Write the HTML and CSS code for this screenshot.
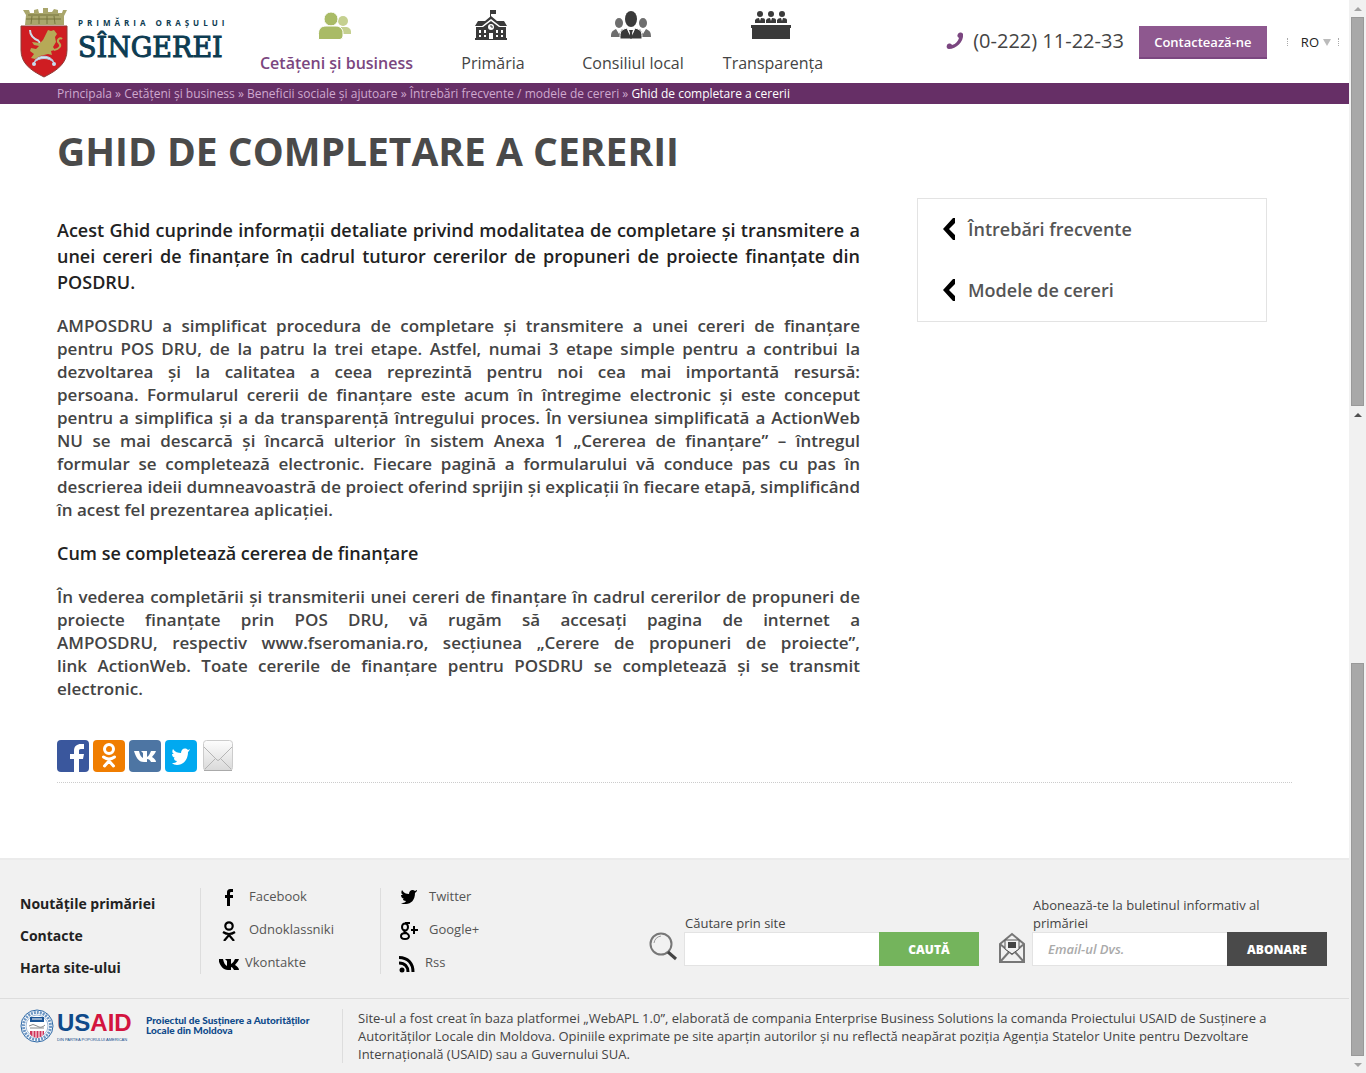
FILE: index.html
```html
<!DOCTYPE html>
<html lang="ro">
<head>
<meta charset="utf-8">
<title>Ghid de completare a cererii</title>
<link rel="stylesheet" href="styles.css">
</head>
<body>
<div class="page">
  <header class="header">
    <a class="logo" href="#">
      <svg class="crest" viewBox="0 0 48 70" width="48" height="70" aria-hidden="true">
        <path d="M5 17 6 7 3 2h6l1 3h4V2l4-1 1 4h4V0h5v4h4l2-3 4 1v3h4l1-3h4l-3 6v9z" fill="#a9a66c"/>
        <path d="M6 11h35M8 7h31M11 16l1-8M19 16V8M27 16V8M35 16l-1-8" stroke="#77753f" fill="none"/>
        <path d="M1 18h46v24C47 55 38 62 24 69 10 62 1 55 1 42z" fill="#cf1d22" stroke="#8f3b37"/>
        <path d="M10 22c0 6 4 9 9 11M19 33l1 4" stroke="#cdddeb" stroke-width="2" fill="none"/>
        <path d="M26 26l2-4 3 1 3-1 3 4-2 3 1 5-3 5 2 3-4 1 1 4-4-1-8 2-5 3-4-1 3-4-4-3 1-3 5 1 3-3-5-1-2-3 8 1 3-3z" fill="#b6a957"/>
        <path d="M34 42c5-1 8-4 5-7s1-6 3-4" stroke="#b6a957" stroke-width="2" fill="none"/>
        <path d="M14 55c2-9 18-9 20 0-4-6-16-6-20 0z" fill="#d9e6f0" stroke="#b9cbe0"/>
        <circle cx="14" cy="56" r="2" fill="#c9dcef"/><circle cx="34" cy="56" r="2" fill="#c9dcef"/>
      </svg>
      <span class="logo-text"><span class="logo-small">PRIMĂRIA ORAȘULUI</span><span class="logo-big">SÎNGEREI</span></span>
    </a>
    <nav class="nav">
      <a class="nav-item active" href="#">
        <svg width="34" height="30" viewBox="0 0 34 30" aria-hidden="true"><g fill="#c5d090"><circle cx="25" cy="11" r="5"/><path d="M20 24v-7h7c4 0 6 2 6 5v2z"/></g><g fill="#a9bb66" stroke="#fff"><circle cx="13" cy="9" r="7"/><path d="M.5 29.500v-6C.5 19 3 16 8 16h10c4 0 7 3 7 7v3q0 3-3 3.500z"/></g></svg>
        <span>Cetățeni și business</span></a>
      <a class="nav-item" href="#">
        <svg width="34" height="30" viewBox="0 0 34 30" aria-hidden="true"><g fill="#3a3a3a"><path d="M16 0h6v4h-5v5h-1z"/><path d="M1 16 4 11h7l6-5 6 5h7l3 5h-7l-9-7-9 7z"/><path d="M2 17h7l8-6 8 6h7v11h1v2H1v-2h1z"/></g><circle cx="17" cy="17" r="3" fill="#fff"/><path d="M17 15v2h2" stroke="#3a3a3a" fill="none"/><path d="M5 20h2v3H5zm5 0h2v3h-2zm-5 5h2v2H5zm5 0h2v2h-2zm12-5h2v3h-2zm5 0h2v3h-2zm-5 5h2v2h-2zm5 0h2v2h-2zM15 23h4v6h-4z" fill="#fff"/></svg>
        <span>Primăria</span></a>
      <a class="nav-item" href="#">
        <svg width="42" height="30" viewBox="0 0 42 30" aria-hidden="true"><g fill="#6e6e6e"><ellipse cx="9" cy="13" rx="4" ry="5"/><ellipse cx="33" cy="13" rx="4" ry="5"/><path d="M1 27c0-5 1-6 5-8l3 5 3-5 3 2v6zM41 27c0-5-1-6-5-8l-3 5-3-5-3 2v6z"/></g><path d="M10 29c0-7 0-9 7-11l4 9 4-9c7 2 7 4 7 11z" fill="#3a3a3a" stroke="#fff"/><path d="M19 20h4l-1 3 1 4-2 2-2-2 1-4z" fill="#3a3a3a"/><ellipse cx="21" cy="9" rx="6" ry="8" fill="#3a3a3a"/></svg>
        <span>Consiliul local</span></a>
      <a class="nav-item" href="#">
        <svg width="40" height="30" viewBox="0 0 40 30" aria-hidden="true"><g fill="#3a3a3a"><circle cx="9" cy="4" r="3"/><circle cx="20" cy="4" r="3"/><circle cx="31" cy="4" r="3"/><path d="M4 13v-3q1-2 4-2l1 3 1-3q4 0 4 2v3zm11 0v-3q1-2 4-2l1 3 1-3q4 0 4 2v3zm11 0v-3q1-2 4-2l1 3 1-3q4 0 4 2v3zM0 15h40v3h-1v11H1V18H0z"/></g></svg>
        <span>Transparența</span></a>
    </nav>
    <div class="header-tools">
      <a class="phone" href="tel:022211223"><svg width="18" height="18" viewBox="0 0 18 18" aria-hidden="true"><path d="M1 13c1-2 4-2 5 0 4-1 6-4 7-7-2-1-2-3-1-4 1-2 4-2 5 0C18 10 10 17 3 17c-2 0-3-2-2-4z" fill="#7b4680"/></svg>(0-222) 11-22-33</a>
      <button class="contact" type="button">Contactează-ne</button>
      <button class="lang" type="button">RO<svg width="8" height="7" viewBox="0 0 8 7" aria-hidden="true"><path d="M0 0h8L4 7z" fill="#bbb"/></svg></button>
    </div>
  </header>
  <nav class="crumbs" aria-label="Navigare"><a href="#">Principala</a> » <a href="#">Cetățeni și business</a> » <a href="#">Beneficii sociale și ajutoare</a> » <a href="#">Întrebări frecvente / modele de cereri</a> » <span class="current">Ghid de completare a cererii</span></nav>
  <main class="content">
    <h1>GHID DE COMPLETARE A CERERII</h1>
    <div class="columns">
      <article class="article">
        <p class="lead">Acest Ghid cuprinde informații detaliate privind modalitatea de completare şi transmitere a unei cereri de finanțare în cadrul tuturor cererilor de propuneri de proiecte finanțate din POSDRU.</p>
        <p>AMPOSDRU a simplificat procedura de completare şi transmitere a unei cereri de finanțare pentru POS DRU, de la patru la trei etape. Astfel, numai 3 etape simple pentru a contribui la dezvoltarea şi la calitatea a ceea reprezintă pentru noi cea mai importantă resursă: persoana.&nbsp;Formularul cererii de finanțare este acum în întregime electronic şi este conceput pentru a simplifica şi a da transparență întregului proces. În versiunea simplificată a ActionWeb NU se mai descarcă şi încarcă ulterior în sistem Anexa 1 „Cererea de finanțare” – întregul formular se completează electronic. Fiecare pagină a formularului vă conduce pas cu pas în descrierea ideii dumneavoastră de proiect oferind sprijin şi explicații în fiecare etapă, simplificând în acest fel prezentarea aplicației.</p>
        <p class="lead">Cum se completează cererea de finanțare</p>
        <p>În vederea completării şi transmiterii unei cereri de finanțare în cadrul cererilor de propuneri de proiecte finanțate prin POS DRU, vă rugăm să accesați pagina de internet a AMPOSDRU,&nbsp;respectiv&nbsp;www.fseromania.ro, secțiunea „Cerere de propuneri de proiecte”, link&nbsp;ActionWeb.&nbsp;Toate cererile de finanțare pentru POSDRU se completează şi se transmit electronic.</p>
      </article>
      <aside class="side">
        <a href="#"><svg width="12" height="22" viewBox="0 0 12 22" aria-hidden="true"><path d="M0 11 10 0h2v5l-6 6 6 6v5h-2z"/></svg>Întrebări frecvente</a>
        <a href="#"><svg width="12" height="22" viewBox="0 0 12 22" aria-hidden="true"><path d="M0 11 10 0h2v5l-6 6 6 6v5h-2z"/></svg>Modele de cereri</a>
      </aside>
    </div>
    <div class="share">
      <a href="#" aria-label="Facebook"><svg width="32" height="32" viewBox="0 0 32 32"><rect width="32" height="32" rx="4" fill="#3a579d"/><path d="M17 32V19h-4v-5h4v-3c0-5 3-7 7-7h3v5h-3c-2 0-2 1-2 2v3h5l-1 5h-4v13z" fill="#fff"/></svg></a>
      <a href="#" aria-label="Odnoklassniki"><svg width="32" height="32" viewBox="0 0 32 32"><rect width="32" height="32" rx="4" fill="#f07d00"/><g fill="none" stroke="#fff" stroke-width="3" stroke-linecap="round"><circle cx="16" cy="9" r="4.500"/><path d="M10.500 17q5.500 4 11 0M11.500 26l4.500-5 4.500 5"/></g></svg></a>
      <a href="#" aria-label="Vkontakte"><svg width="32" height="32" viewBox="0 0 32 32"><rect width="32" height="32" rx="4" fill="#4d75a3"/><path d="M15 22C9 22 7 17 5 11h5c1 4 2 6 4 7v-5l-2-2h6v6c2-1 3-4 4-6h5c-1 3-3 4-4 6 2 1 4 3 4 5h-5c-1-2-2-3-4-3v3z" fill="#fff"/></svg></a>
      <a href="#" aria-label="Twitter"><svg width="32" height="32" viewBox="0 0 32 32"><rect width="32" height="32" rx="4" fill="#00a9f0"/><path transform="translate(7 7)" d="M18 3l-2 2c0 8-5 13-11 13-2 0-4-1-5-2 2 0 4 0 5-2-2 0-3-1-3-3h1c-2-1-3-2-3-4h2C0 6 0 4 1 2c2 3 5 4 8 4 0-4 4-6 7-3l2-1-1 2z" fill="#fff"/></svg></a>
      <a href="#" aria-label="Email"><svg width="34" height="32" viewBox="0 0 34 32"><defs><linearGradient id="m" x2="0" y2="1"><stop stop-color="#fdfdfd"/><stop offset="1" stop-color="#d9d9d9"/></linearGradient></defs><rect x="2.500" y=".5" width="29" height="30" rx="3" fill="url(#m)" stroke="#ccc"/><path d="M3 30.500h28" stroke="#aaa"/><path d="M3 7l13 13q1 1 2 0L31 7M4 29l10-10M30 29 20 19" stroke="#b5b5b5" fill="none"/></svg></a>
    </div>
  </main>
  <footer class="footer">
    <div class="footer-top">
      <nav class="footer-links"><a href="#">Noutățile primăriei</a><a href="#">Contacte</a><a href="#">Harta site-ului</a></nav>
      <nav class="social">
        <a href="#"><svg width="20" height="20" viewBox="0 0 20 20"><path d="M8 18v-8H6V7h2V5c0-3 1-4 4-4h2v3h-2c-1 0-1 1-1 1v2h3v3h-3v8z"/></svg>Facebook</a>
        <a href="#"><svg width="20" height="20" viewBox="0 0 20 20"><g fill="none" stroke="#000" stroke-width="2.200"><circle cx="10" cy="5" r="3.700"/><path d="M4 11q6 4 12 0M5 20l5-6 5 6"/></g></svg>Odnoklassniki</a>
        <a class="near" href="#"><svg width="20" height="20" viewBox="0 0 20 20"><path transform="translate(-6 -6)" d="M15 22C9 22 7 17 5 11h5c1 4 2 6 4 7v-5l-2-2h6v5c2-1 3-3 4-5h4c-1 3-3 4-4 6 2 1 4 3 4 5h-5c-1-2-2-3-3-3v3z"/></svg>Vkontakte</a>
      </nav>
      <nav class="social">
        <a href="#"><svg width="20" height="20" viewBox="0 0 20 20"><path transform="translate(1 0)" d="M17 3l-2 2c0 7-4 11-9 11-2 0-4 0-5-1 2 0 4 0 5-2-2 0-3-1-3-2h1C2 10 1 9 1 7h2C1 6 1 4 2 2c2 3 4 4 7 4 0-4 4-5 6-3l2-1z"/></svg>Twitter</a>
        <a href="#"><svg width="20" height="20" viewBox="0 0 20 20"><g fill="none" stroke="#000" stroke-width="2"><ellipse cx="6" cy="6" rx="3" ry="3.500"/><path d="M6 2h5M6 9c-3 2 4 3 4 6 0 4-8 4-8 0 0-2 2-3 5-3M12 9h7M15 5v8"/></g></svg>Google+</a>
        <a class="near" href="#"><svg width="20" height="20" viewBox="0 0 20 20"><circle cx="3" cy="16" r="2.500"/><path d="M0 9c6 0 9 4 9 9M0 3.500c9 0 14 6 14 14.500" fill="none" stroke="#000" stroke-width="3"/></svg>Rss</a>
      </nav>
      <form class="form search">
        <svg width="30" height="34" viewBox="0 0 30 34" aria-hidden="true"><circle cx="13" cy="12" r="10.500" fill="none" stroke="#777" stroke-width="2"/><path d="M6 11q1-6 7-7" fill="none" stroke="#999"/><path d="M20 20l8 7" stroke="#444" stroke-width="3"/></svg>
        <div class="field"><label for="q">Căutare prin site</label><div class="row"><input id="q" type="text"><button class="go" type="button">CAUTĂ</button></div></div>
      </form>
      <form class="form">
        <svg width="28" height="34" viewBox="0 0 28 34" aria-hidden="true"><path d="M2 12 14 2l12 10v18H2zM2 12l12 10 12-10M2 30l9-10M26 30l-9-10" fill="#f1f1f1" stroke="#777" stroke-width="2"/><path d="M7 17V8h14v9l-7 5z" fill="#f1f1f1" stroke="#555"/><path d="M10 10h8v6h-8z" fill="#444"/></svg>
        <div class="field"><label for="e">Abonează-te la buletinul informativ al primăriei</label><div class="row"><input id="e" type="email" placeholder="Email-ul Dvs."><button class="subscribe" type="button">ABONARE</button></div></div>
      </form>
    </div>
    <div class="footer-bottom">
      <a class="usaid" href="#">
        <svg width="34" height="34" viewBox="0 0 34 34" aria-hidden="true"><circle cx="17" cy="17" r="16" fill="#fff" stroke="#2c67a5"/><circle cx="17" cy="17" r="13.500" fill="none" stroke="#6e97c4" stroke-width="3" stroke-dasharray="2 1"/><circle cx="17" cy="17" r="11" fill="#fff" stroke="#9db8d6"/><path d="M10 8h14v5H10z" fill="#1c5596"/><path d="M12 10h10" stroke="#fff"/><path d="M9 17q4-3 8 0t8-1M10 19h14" stroke="#888" fill="none"/><path d="M10 22h14v3q-2 3-7 4-5-1-7-4z" fill="#d0345a"/><path d="M13 22v6M16 22v7M19 22v7M22 22v5" stroke="#fff"/></svg>
        <span class="usaid-name"><span class="usaid-mark">US<b>AID</b></span><span class="usaid-tag">DIN PARTEA POPORULUI AMERICAN</span></span>
        <span class="project">Proiectul de Susținere a Autorităților<br>Locale din Moldova</span>
      </a>
      <p class="note">Site-ul a fost creat în baza platformei „WebAPL 1.0”, elaborată de compania Enterprise Business Solutions la comanda Proiectului USAID de Susținere a Autorităților Locale din Moldova. Opiniile exprimate pe site aparțin autorilor și nu reflectă neapărat poziția Agenţia Statelor Unite pentru Dezvoltare Internaţională (USAID) sau a Guvernului SUA.</p>
    </div>
  </footer>
</div>
<div class="scrollbar" aria-hidden="true">
  <i class="arrow up light"></i><i class="thumb"></i><i class="arrow up"></i><i class="gap"></i><i class="thumb"></i><i class="arrow down light"></i>
</div>
</body>
</html>
```
FILE: styles.css
```css
* { box-sizing: border-box; }
body { margin: 0; display: flex; min-height: 100vh; background: #fff; color: #444; font-family: "Open Sans", sans-serif; font-size: 13px; }
a { color: inherit; text-decoration: none; }
svg { flex: none; display: block; }
button, input { font-family: inherit; border: 0; border-radius: 0; margin: 0; }
.page { flex: 1; min-width: 0; display: flex; flex-direction: column; }

.header { display: flex; height: 83px; }
.logo { display: flex; width: 240px; padding: 8px 0 0 20px; gap: 10px; color: #0d3c52; }
.logo-text { display: flex; flex-direction: column; padding-top: 9px; white-space: nowrap; }
.logo-small { font: 700 8px/12px "Open Sans", sans-serif; letter-spacing: 4px; }
.logo-big { font: 400 27px/38px "DejaVu Serif", serif; -webkit-text-stroke: 1px #0d3c52; }
.nav { display: grid; grid-template-columns: 193px 120px 160px 120px; }
.nav-item { display: flex; flex-direction: column; align-items: center; padding-top: 10px; gap: 12px; font-size: 16px; line-height: 22px; color: #444; white-space: nowrap; }
.nav-item svg { margin-right: 4px; }
.nav-item.active { font-weight: 600; color: #7b4680; }
.header-tools { display: flex; align-items: flex-start; margin-left: auto; padding: 26px 10px 0 0; }
.phone { display: flex; align-items: center; gap: 9px; font-size: 20px; line-height: 30px; margin-right: 15px; color: #444; }
.contact { width: 128px; height: 33px; padding: 0; background: #8e588f; border-bottom: 2px solid #7b4680; color: #fff; font-weight: 600; font-size: 13px; }
.lang { display: flex; align-items: center; gap: 4px; margin: 12px 0 0 20px; height: 8px; padding: 0 7px 0 13px; background: none; border-left: 1px dotted #aaa; border-right: 1px dotted #aaa; font-size: 13px; line-height: 8px; color: #222; }

.crumbs { background: #662f66; color: #cfa9cf; padding: 0 57px; font-size: 12px; line-height: 21px; }
.crumbs .current { color: #fff; }

.content { flex: 1; padding: 0 57px; }
h1 { margin: 19px 0; font-size: 39px; line-height: 56px; font-weight: 700; color: #4a4a4a; }
.columns { display: flex; margin-right: -1px; }
.article { flex: 0 1 803px; padding-top: 19px; }
.article p { margin: 0 0 19px; font-size: 17px; line-height: 23px; font-weight: 600; color: #444; text-align: justify; }
.article .lead { font-size: 18px; line-height: 26px; color: #222; }
.side { flex: 0 0 350px; align-self: flex-start; margin-left: 57px; border: 1px solid #e3e3e3; }
.side a { display: flex; align-items: center; gap: 13px; height: 61px; padding: 0 0 2px 25px; font-size: 18px; font-weight: 600; color: #555; }
.share { display: flex; gap: 4px; margin-top: 21px; padding-bottom: 10px; border-bottom: 1px dotted #ccc; }

.footer { background: #f1f1f1; border-top: 2px solid #ebebeb; font-weight: 500; }
.footer-top { display: flex; height: 138px; padding: 28px 22px 0 20px; }
.footer-links { display: flex; flex-direction: column; width: 180px; font-size: 14px; font-weight: 700; line-height: 32px; color: #222; }
.social { display: flex; flex-direction: column; width: 180px; height: 86px; border-left: 1px solid #ddd; padding-left: 18px; font-size: 13px; color: #555; }
.social a { display: flex; flex: 0 0 33px; gap: 10px; line-height: 17px; }
.social .near { gap: 6px; }
.form { display: flex; align-items: flex-end; height: 78px; gap: 6px; }
.search { margin-left: auto; margin-right: 19px; }
.field { width: 295px; line-height: 18px; color: #444; }
.field label { display: block; padding: 0 50px 0 1px; }
.row { display: flex; }
.row input { flex: 1; min-width: 0; height: 34px; padding: 0 15px; background: #fff; border: 1px solid #e3e3e3; border-right: 0; font-size: 13px; }
.row input::placeholder { color: #aaa; font-style: italic; font-weight: 600; }
.row button { width: 100px; height: 34px; color: #fff; font-size: 12px; font-weight: 800; padding: 0; }
.go { background: #74b45c; }
.subscribe { background: #4a4a4a; }
.footer-bottom { display: flex; padding: 10px 20px; border-top: 1px solid #ddd; }
.usaid { display: flex; width: 322px; gap: 3px; }
.usaid-name { display: flex; flex-direction: column; width: 86px; color: #0f4a8a; white-space: nowrap; }
.usaid-mark { font: 700 24px/28px "Liberation Sans", sans-serif; }
.usaid-mark b { color: #d3143f; }
.usaid-tag { font: 400 4px/6px "Liberation Sans", sans-serif; }
.project { padding-top: 6px; font: 900 10px/10px Lato, sans-serif; color: #0f4a8a; white-space: nowrap; }
.note { flex: 1; margin: 0; padding-left: 15px; border-left: 1px solid #ddd; line-height: 18px; color: #444; }

.scrollbar { flex: 0 0 17px; display: flex; flex-direction: column; background: #f1f1f1; }
.thumb { flex: 389; margin: 0 2px; background: #a8a8a8; border: 1px solid #999; }
.gap { flex: 240; }
.gap + .thumb { flex: 393; }
.arrow { height: 17px; display: flex; align-items: center; justify-content: center; }
.arrow::before { content: ""; border: 4px solid transparent; border-top-width: 0; border-bottom-color: #505050; }
.arrow.light::before { border-bottom-color: #a3a3a3; }
.arrow.down::before { border-width: 4px 4px 0; border-color: #a3a3a3 transparent; }
```
